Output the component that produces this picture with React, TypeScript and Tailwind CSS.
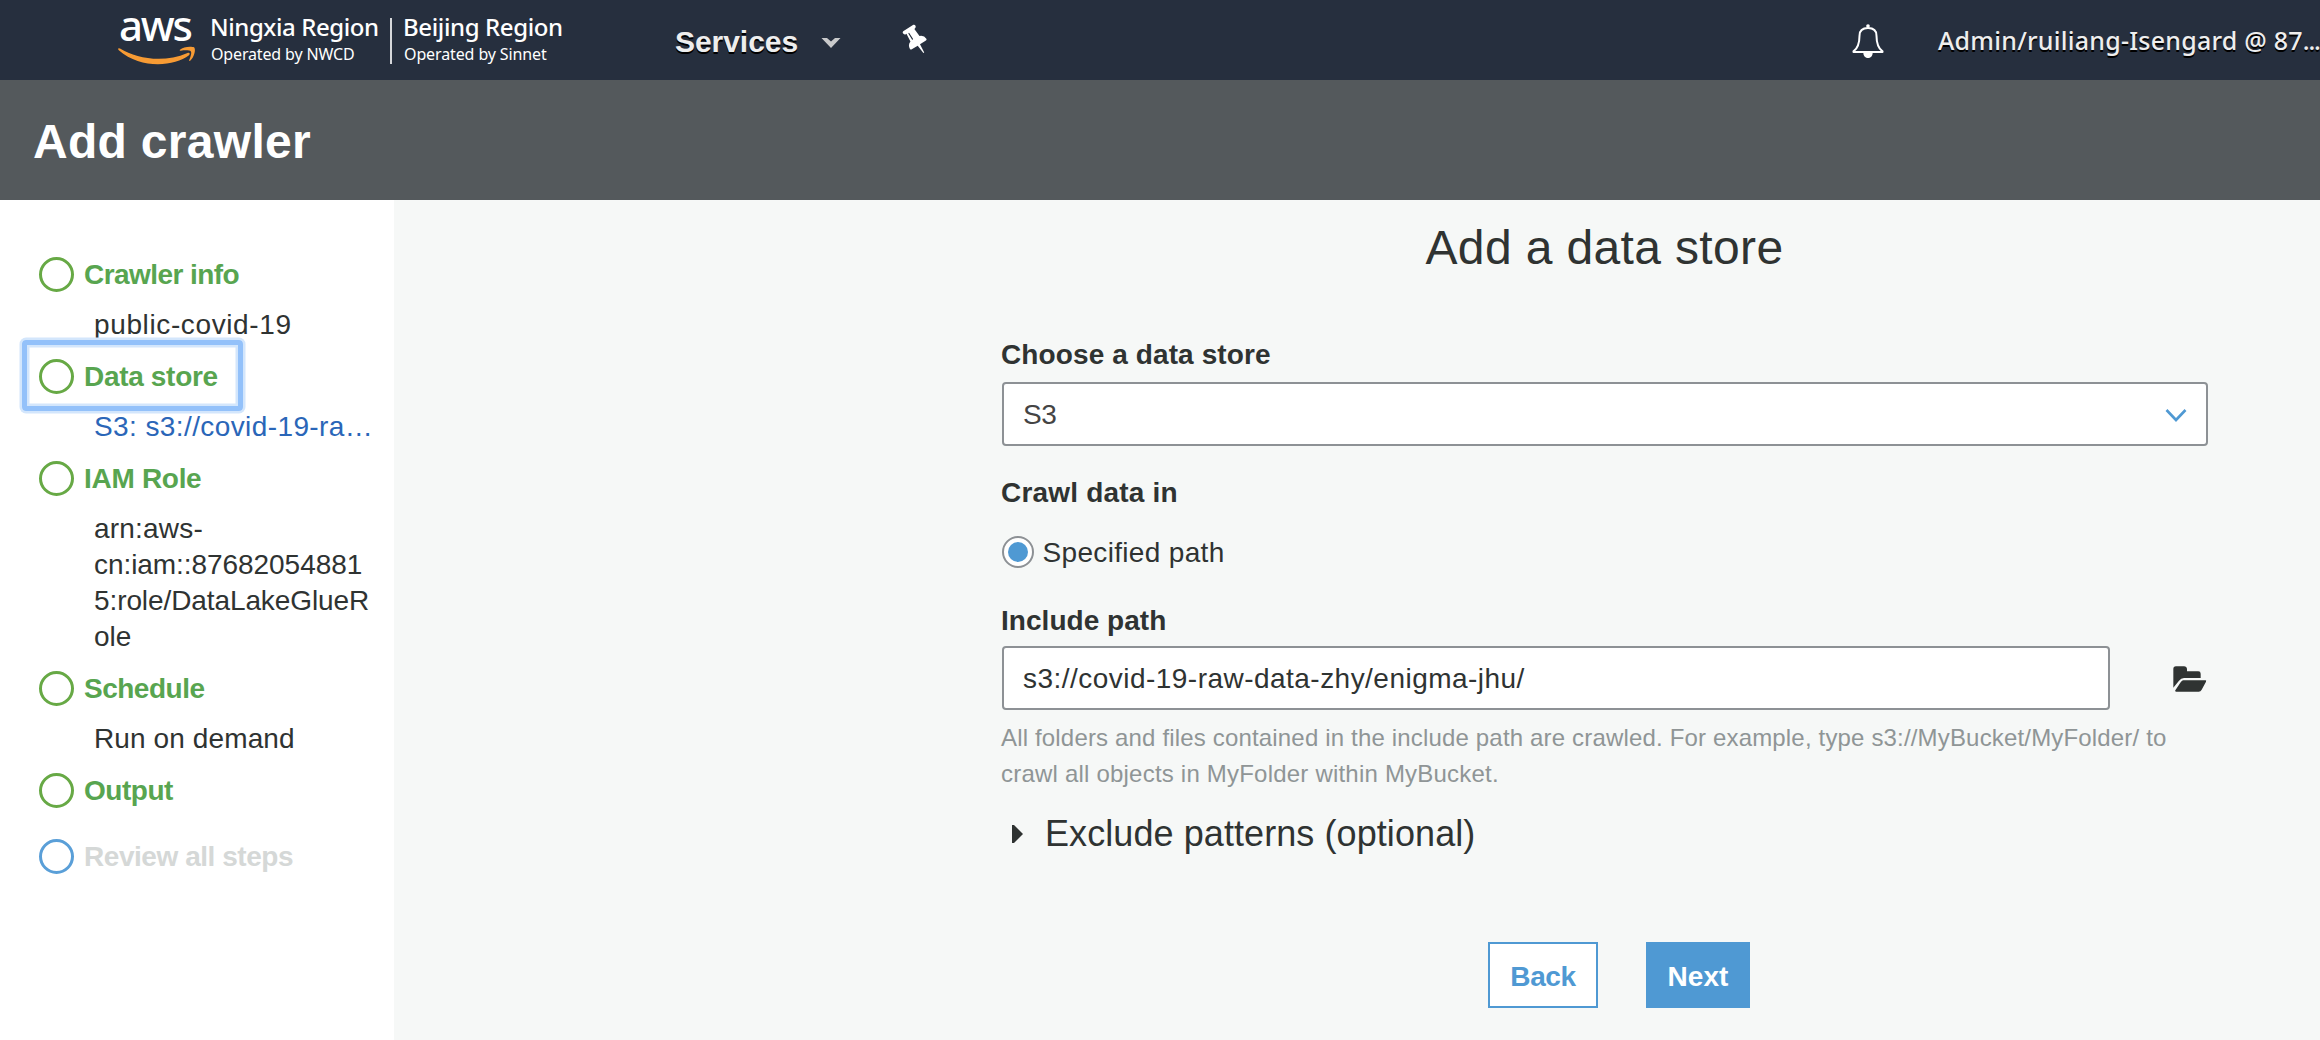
import React from 'react'

type Line = { text: string; className: string }
type Step = {
  label: string
  labelClass: string
  ring?: 'blue'
  focused?: boolean
  lines?: Line[]
}

const steps: Step[] = [
  {
    label: 'Crawler info',
    labelClass: 'text-[#58a550] tracking-[-0.56px]',
    lines: [{ text: 'public-covid-19', className: 'text-[#2f3332] tracking-[0.62px]' }],
  },
  {
    label: 'Data store',
    labelClass: 'text-[#58a550] tracking-[-0.32px]',
    focused: true,
    lines: [{ text: 'S3: s3://covid-19-ra…', className: 'text-[#2a66b8] tracking-[0.4px]' }],
  },
  {
    label: 'IAM Role',
    labelClass: 'text-[#58a550] tracking-[-0.3px]',
    lines: [
      { text: 'arn:aws-', className: 'text-[#2f3332] tracking-[0.2px]' },
      { text: 'cn:iam::87682054881', className: 'text-[#2f3332] tracking-[-0.06px]' },
      { text: '5:role/DataLakeGlueR', className: 'text-[#2f3332] tracking-[-0.096px]' },
      { text: 'ole', className: 'text-[#2f3332]' },
    ],
  },
  {
    label: 'Schedule',
    labelClass: 'text-[#58a550] tracking-[-0.5px]',
    lines: [{ text: 'Run on demand', className: 'text-[#2f3332] tracking-[0.11px]' }],
  },
  { label: 'Output', labelClass: 'text-[#58a550] tracking-[-0.483px]' },
  { label: 'Review all steps', labelClass: 'text-[#d5d8d7] tracking-[-0.45px]', ring: 'blue' },
]

function AwsLogo() {
  return (
    <svg width="80" height="80" viewBox="0 0 80 80" className="ml-[117px] shrink-0">
      <text
        x="2"
        y="41"
        textLength="74"
        lengthAdjust="spacing"
        className="fill-white font-['Noto_Sans',sans-serif] text-[42px] font-medium"
      >
        aws
      </text>
      <path
        fill="#f79b34"
        d="M1 49 Q1.500 47.600 3 48.500 C20 58.500 46 63.500 70.500 53 C72.500 52.300 73.500 54 72 55.200 C57 66.500 24 69.500 1.800 50.200 Z"
      />
      <path
        fill="#f79b34"
        d="M63 49.800 C66 46.800 74 46.200 77.300 47.500 C79 50 77 57.500 73.200 60.700 C72.200 61.300 71.900 60.700 72.300 59.800 C73.600 56.800 74.800 53 73.900 51.500 C72.800 50 67.500 50.200 63.800 50.700 C62.600 50.800 62.300 50.400 63 49.800 Z"
      />
    </svg>
  )
}

function Pin() {
  return (
    <svg width="32" height="36" viewBox="30 25 96 108" className="shrink-0">
      <g transform="translate(58 45) rotate(-32)" fill="#fff">
        <path d="M-18 -6 H18 Q22 -5 22 -1 Q22 5 16 6 H14 L16 32 Q29 37 29 50 Q29 54 25 54 H4 L1.500 82 H-1.500 L-4 54 H-25 Q-29 54 -29 50 Q-29 37 -16 32 L-14 6 H-16 Q-22 5 -22 -1 Q-22 -5 -18 -6 Z" />
        <path d="M-7 9 V29" stroke="#262f3e" strokeWidth="3.500" strokeLinecap="round" />
      </g>
    </svg>
  )
}

function Bell() {
  return (
    <svg width="34" height="38" viewBox="92 68 102 114" className="shrink-0">
      <circle cx="143" cy="77" r="5.500" fill="#fff" />
      <path
        d="M143 83 C126 83 117.500 92 117.500 106 C117.500 128 113 143 99.500 153 V155 H186.500 V153 C173 143 168.500 128 168.500 106 C168.500 92 160 83 143 83 Z"
        fill="none"
        stroke="#fff"
        strokeWidth="6"
        strokeLinejoin="round"
      />
      <path d="M129 157 H157 C157 178 129 178 129 157 Z" fill="#fff" />
    </svg>
  )
}

function FolderOpen() {
  return (
    <svg width="34" height="26" viewBox="0 0 102 78" fill="#2f3332" className="mt-[19.500px] shrink-0">
      <path d="M1 65 V9 Q1 1 9 1 H33 Q41 1 42 9 V16 H76 Q83 16 83 23 V36 H33 Q24 37 18 44 Z" />
      <path d="M31 43 H97 Q101 43 99 47 L86 71 Q83 77 77 77 H10 Q4 76 8 71 L23 49 Q27 43 31 43 Z" />
    </svg>
  )
}

function TopBar() {
  return (
    <header className="flex h-20 items-start overflow-hidden bg-[#262f3e] whitespace-nowrap">
      <AwsLogo />
      <div className="ml-[13px] w-[180px] shrink-0 pt-[10px] font-['Noto_Sans',sans-serif] text-white">
        <div className="text-[24px] leading-[33px] font-medium tracking-[-0.422px]">Ningxia Region</div>
        <div className="pl-px text-[16px] leading-[22px] tracking-[-0.15px]">Operated by NWCD</div>
      </div>
      <div className="mt-[18px] h-[46px] w-[2px] shrink-0 bg-[#d5d7da]" />
      <div className="ml-[11px] w-[272px] shrink-0 pt-[10px] font-['Noto_Sans',sans-serif] text-white">
        <div className="text-[24px] leading-[33px] font-medium tracking-[-0.388px]">Beijing Region</div>
        <div className="pl-px text-[16px] leading-[22px] tracking-[-0.116px]">Operated by Sinnet</div>
      </div>
      <div className="mt-[25px] w-[146px] shrink-0 text-[30px] leading-[33px] font-bold tracking-[-0.05px] text-[#eee] [text-shadow:0_2px_0_#000]">
        Services
      </div>
      <svg width="20" height="12" viewBox="0 0 20 12" className="mt-[37px] shrink-0">
        <path d="M0.500 1 H6 L10 4.500 L14 1 H19.500 L10 11 Z" fill="#c9cacb" />
      </svg>
      <div className="mt-[23px] ml-[59px]">
        <Pin />
      </div>
      <div className="mt-[22.500px] ml-[919px]">
        <Bell />
      </div>
      <div className="mt-[23px] ml-[53px] flex shrink-0 font-['Noto_Sans',sans-serif] text-[25px] leading-[34px] font-medium tracking-[0.24px] text-[#eee] [text-shadow:0_2px_0_#000]">
        Admin/ruiliang-Isengard @ 87<span className="tracking-[-1.2px]">...</span>
      </div>
    </header>
  )
}

function StepItem({ step }: { step: Step }) {
  return (
    <li>
      <div className="relative flex h-9 items-center">
        {step.focused && (
          <div className="absolute -top-[18px] -left-[17px] h-[71px] w-[221px] rounded-[4px] border-[5px] border-[#93c1fa] shadow-[0_0_0_2.5px_#d3e6fc,inset_0_0_0_2.5px_#d3e6fc]" />
        )}
        <span
          className={
            step.ring === 'blue'
              ? 'h-[35px] w-[35px] rounded-full border-3 border-[#5a9fd8]'
              : 'h-[35px] w-[35px] rounded-full border-3 border-[#67a945]'
          }
        />
        <span className={`ml-[10px] h-9 text-[28px] leading-[37px] font-bold ${step.labelClass}`}>{step.label}</span>
      </div>
      {step.lines ? (
        <div className="mt-[14px] mb-4 pl-[55px] text-[28px]">
          {step.lines.map((l) => (
            <div key={l.text} className={`h-9 leading-[37px] ${l.className}`}>
              {l.text}
            </div>
          ))}
        </div>
      ) : (
        <div className="h-[30px]" />
      )}
    </li>
  )
}

export default function App() {
  return (
    <div className="flex h-[1040px] w-[2320px] flex-col overflow-hidden bg-[#f6f8f7] font-['Liberation_Sans',Arial,sans-serif] text-[#2f3332]">
      <TopBar />
      <div className="h-[120px] bg-[#54595c] pt-[33px] pl-[33px]">
        <h1 className="text-[48px] leading-[57px] font-bold tracking-[0.3px] text-white">Add crawler</h1>
      </div>
      <div className="flex flex-1 whitespace-nowrap">
        <aside className="w-[394px] shrink-0 bg-white pt-14 pl-[39px]">
          <ol>
            {steps.map((s) => (
              <StepItem key={s.label} step={s} />
            ))}
          </ol>
        </aside>
        <main className="ml-[608px] w-[1206px] pt-[19px]">
          <h2 className="pr-px text-center text-[48px] leading-[57px] tracking-[0.364px]">Add a data store</h2>

          <div className="mt-[60px] -ml-px h-9 text-[28px] leading-[37px] font-bold tracking-[0.108px]">
            Choose a data store
          </div>
          <div className="mt-[10px] flex h-16 justify-between rounded-[4px] border-2 border-[#8d9195] bg-white pt-3 pr-[19px] pl-[19px] text-[28px] leading-[37px] text-[#444]">
            <span className="tracking-[-0.5px]">S3</span>
            <svg width="22" height="14" viewBox="0 0 22 14" className="mt-3">
              <path d="M1.500 2 L11 12 L20.500 2" fill="none" stroke="#4f99d3" strokeWidth="2.600" />
            </svg>
          </div>

          <div className="mt-7 -ml-px h-9 text-[28px] leading-[37px] font-bold tracking-[0.2px]">Crawl data in</div>
          <div className="mt-6 flex h-9 items-center">
            <span className="flex h-8 w-8 items-center justify-center rounded-full border-2 border-[#8d9195] bg-white">
              <span className="h-5 w-5 rounded-full bg-[#4f99d3]" />
            </span>
            <span className="ml-[8.500px] h-9 text-[28px] leading-[37px] tracking-[0.33px]">Specified path</span>
          </div>

          <div className="mt-8 -ml-px h-9 text-[28px] leading-[37px] font-bold tracking-[0.04px]">Include path</div>
          <div className="mt-2 flex h-16 justify-between">
            <div className="w-[1108px] rounded-[4px] border-2 border-[#8d9195] bg-white pt-3 pl-[19px] text-[28px] leading-[37px] tracking-[0.47px]">
              s3://covid-19-raw-data-zhy/enigma-jhu/
            </div>
            <div className="mr-px">
              <FolderOpen />
            </div>
          </div>
          <div className="mt-[9px] -ml-px text-[24px] leading-[37px] text-[#8f9596]">
            <div className="h-9 tracking-[0.168px]">
              All folders and files contained in the include path are crawled. For example, type s3://MyBucket/MyFolder/ to
            </div>
            <div className="h-9 tracking-[0.21px]">crawl all objects in MyFolder within MyBucket.</div>
          </div>

          <div className="mt-5 flex h-[45px] items-start">
            <svg width="11" height="18" viewBox="0 0 11 18" className="mt-[14px] ml-[10px]">
              <path d="M0 0 L2 0 L11 9 L2 18 L0 18 Z" fill="#2f3332" />
            </svg>
            <span className="ml-[22px] text-[36px] leading-[45px] tracking-[0.08px]">Exclude patterns (optional)</span>
          </div>

          <div className="mt-[86px] ml-[486px] flex gap-12 text-center text-[28px] leading-[37px] font-bold">
            <button className="h-[66px] w-[110px] border-2 border-[#4f99d3] bg-white pt-[3px] tracking-[-0.4px] text-[#4f99d3]">
              Back
            </button>
            <button className="h-[66px] w-[104px] border-2 border-[#4f99d3] bg-[#4f99d3] pt-[3px] tracking-[0.1px] text-white">
              Next
            </button>
          </div>
        </main>
      </div>
    </div>
  )
}
